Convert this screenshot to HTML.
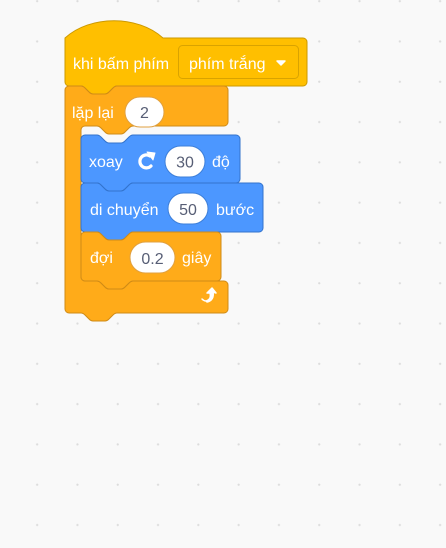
<!DOCTYPE html>
<html><head><meta charset="utf-8"><style>
html,body{margin:0;padding:0;width:446px;height:548px;overflow:hidden;background:#f9f9f9;}
body{background-image:radial-gradient(circle,#dcdcdc 0.9px,transparent 1.3px);background-size:40.3px 40.3px;background-position:17px -19px;}
svg{position:absolute;left:0;top:0;}
text{font-family:"Liberation Sans","Noto Sans CJK SC",sans-serif;font-size:16px;}
.w{fill:#fff;}
.g{fill:#575e75;text-anchor:middle;}
</style></head><body>
<svg width="446" height="548" viewBox="0 0 446 548">
<!-- hat -->
<path d="M65,38 c25,-23 73,-23 98,0 H303 a4,4 0 0 1 4,4 V82 a4,4 0 0 1 -4,4 H117 c-2,0 -3,1 -4,2 l-4,4 c-1,1 -2,2 -4,2 h-12 c-2,0 -3,-1 -4,-2 l-4,-4 c-1,-1 -2,-2 -4,-2 H69 a4,4 0 0 1 -4,-4 Z" fill="#ffbf00" stroke="#cc9900"/>
<text x="73" y="69" class="w">khi bấm phím</text>
<rect x="178.5" y="45.5" width="120" height="33" rx="4" fill="#ffbf00" stroke="#d9a300"/>
<text x="189" y="69" class="w">phím trắng</text>
<path d="M277,61 h8 l-4,4 z" fill="#fff" stroke="#fff" stroke-linejoin="round" stroke-width="1.5"/>
<!-- repeat C -->
<path d="M65,90 a4,4 0 0 1 4,-4 H81 c2,0 3,1 4,2 l4,4 c1,1 2,2 4,2 h12 c2,0 3,-1 4,-2 l4,-4 c1,-1 2,-2 4,-2 H224 a4,4 0 0 1 4,4 V122 a4,4 0 0 1 -4,4 H133 c-2,0 -3,1 -4,2 l-4,4 c-1,1 -2,2 -4,2 h-12 c-2,0 -3,-1 -4,-2 l-4,-4 c-1,-1 -2,-2 -4,-2 H85 a4,4 0 0 0 -4,4 V277 a4,4 0 0 0 4,4 H97 c2,0 3,1 4,2 l4,4 c1,1 2,2 4,2 h12 c2,0 3,-1 4,-2 l4,-4 c1,-1 2,-2 4,-2 H224 a4,4 0 0 1 4,4 V309 a4,4 0 0 1 -4,4 H117 c-2,0 -3,1 -4,2 l-4,4 c-1,1 -2,2 -4,2 h-12 c-2,0 -3,-1 -4,-2 l-4,-4 c-1,-1 -2,-2 -4,-2 H69 a4,4 0 0 1 -4,-4 Z" fill="#ffab19" stroke="#cf8b17"/>
<text x="72" y="118" class="w">lặp lại</text>
<rect x="125" y="97" width="39" height="30" rx="15" fill="#fff" stroke="#e0a040"/>
<text x="144.5" y="118" class="g">2</text>
<path d="M213,292 c1,5 -1,9 -6,10 l-1,-1 c4,-1 5,-4 4,-8 h-3 l5,-5 l4,5 z M206,301 c-2,0 -3,-1 -4,-2" fill="#fff" stroke="#fff" stroke-width="1.5" stroke-linejoin="round" stroke-linecap="round"/>
<!-- xoay -->
<path d="M81,139 a4,4 0 0 1 4,-4 H97 c2,0 3,1 4,2 l4,4 c1,1 2,2 4,2 h12 c2,0 3,-1 4,-2 l4,-4 c1,-1 2,-2 4,-2 H236 a4,4 0 0 1 4,4 V179 a4,4 0 0 1 -4,4 H133 c-2,0 -3,1 -4,2 l-4,4 c-1,1 -2,2 -4,2 h-12 c-2,0 -3,-1 -4,-2 l-4,-4 c-1,-1 -2,-2 -4,-2 H85 a4,4 0 0 1 -4,-4 Z" fill="#4c97ff" stroke="#3373cc"/>
<text x="89" y="167" class="w">xoay</text>
<path d="M150,156 A6.5,6.5 0 1 0 151,166" fill="none" stroke="#fff" stroke-width="3.2" stroke-linecap="round"/>
<path d="M147,152 L155,153 L153,160 Z" fill="#fff" stroke="#fff" stroke-linejoin="round"/>
<rect x="165" y="146" width="40" height="31" rx="15.5" fill="#fff" stroke="#3d7fd9"/>
<text x="185" y="167.5" class="g">30</text>
<text x="212" y="167" class="w">độ</text>
<!-- move -->
<path d="M81,187 a4,4 0 0 1 4,-4 H97 c2,0 3,1 4,2 l4,4 c1,1 2,2 4,2 h12 c2,0 3,-1 4,-2 l4,-4 c1,-1 2,-2 4,-2 H259 a4,4 0 0 1 4,4 V228 a4,4 0 0 1 -4,4 H133 c-2,0 -3,1 -4,2 l-4,4 c-1,1 -2,2 -4,2 h-12 c-2,0 -3,-1 -4,-2 l-4,-4 c-1,-1 -2,-2 -4,-2 H85 a4,4 0 0 1 -4,-4 Z" fill="#4c97ff" stroke="#3373cc"/>
<text x="90" y="215" class="w">di chuyển</text>
<rect x="168" y="193" width="40" height="31" rx="15.5" fill="#fff" stroke="#3d7fd9"/>
<text x="188" y="215" class="g">50</text>
<text x="216" y="215" class="w">bước</text>
<!-- wait -->
<path d="M81,236 a4,4 0 0 1 4,-4 H97 c2,0 3,1 4,2 l4,4 c1,1 2,2 4,2 h12 c2,0 3,-1 4,-2 l4,-4 c1,-1 2,-2 4,-2 H217 a4,4 0 0 1 4,4 V277 a4,4 0 0 1 -4,4 H133 c-2,0 -3,1 -4,2 l-4,4 c-1,1 -2,2 -4,2 h-12 c-2,0 -3,-1 -4,-2 l-4,-4 c-1,-1 -2,-2 -4,-2 H85 a4,4 0 0 1 -4,-4 Z" fill="#ffab19" stroke="#cf8b17"/>
<text x="90" y="263" class="w">đợi</text>
<rect x="130" y="242" width="45" height="31" rx="15.5" fill="#fff" stroke="#e0a040"/>
<text x="152.5" y="264" class="g">0.2</text>
<text x="182" y="263" class="w">giây</text>
</svg>
</body></html>
